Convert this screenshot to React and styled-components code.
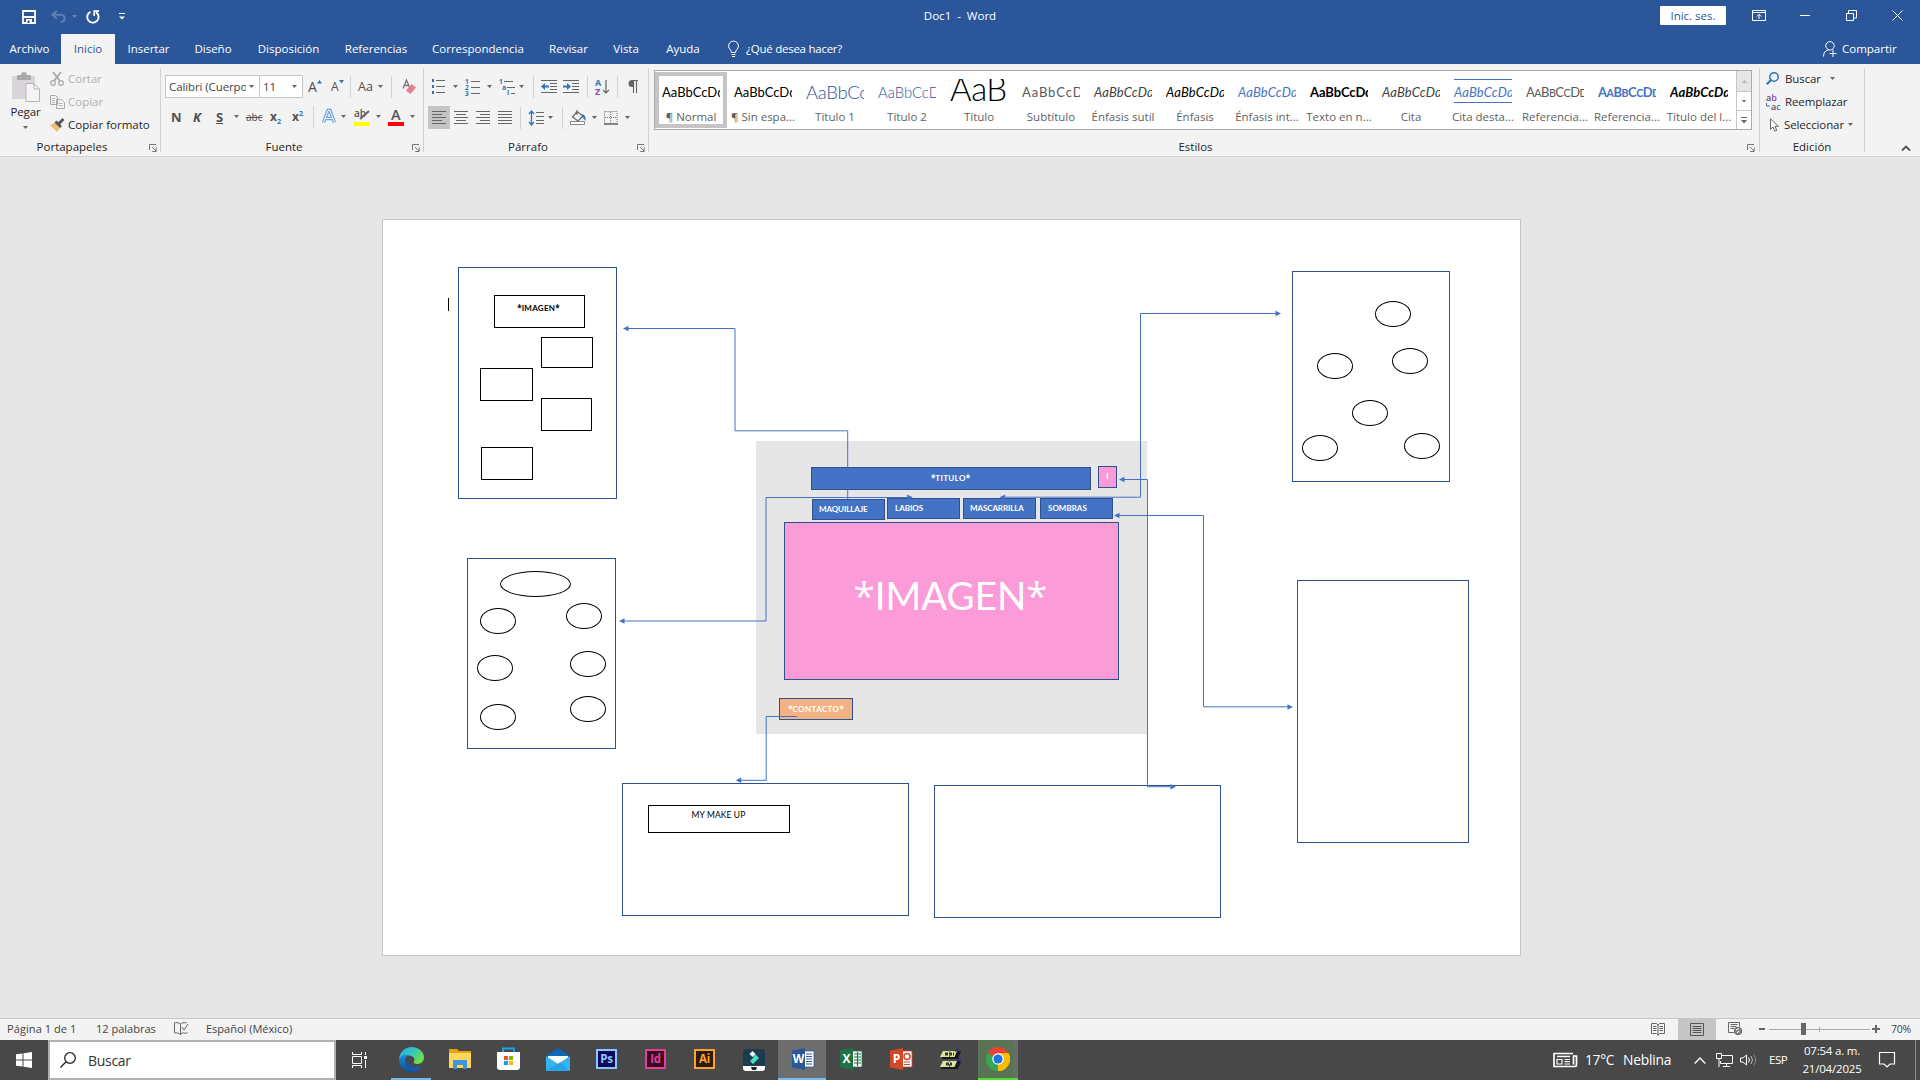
import React from "react";
import styled, { createGlobalStyle, css } from "styled-components";

const ui = `"Open Sans", "Noto Sans", sans-serif`;
const doc = `Lato, "Open Sans", sans-serif`;

const Global = createGlobalStyle`
  * { box-sizing: border-box; }
  body { margin: 0; font-family: ${ui}; font-size: 11.5px; color: #262626; overflow: hidden; }
  svg { display: block; flex: none; overflow: visible; }
`;

const Screen = styled.div`
  width: 1920px;
  height: 1080px;
  display: flex;
  flex-direction: column;
  background: #e6e6e6;
`;

/* ---------- shared pieces ---------- */
const Slot = styled.div`
  display: flex;
  flex: none;
  align-items: center;
  margin-left: ${(p) => p.$gap || 0}px;
  width: ${(p) => (p.$w ? `${p.$w}px` : "auto")};
  height: ${(p) => (p.$h ? `${p.$h}px` : "auto")};
`;
const Text = styled.div`
  flex: none;
  white-space: pre;
  line-height: 16px;
  margin-left: ${(p) => p.$gap || 0}px;
  width: ${(p) => (p.$w ? `${p.$w}px` : "auto")};
  font-size: ${(p) => p.$size || 11.5}px;
  letter-spacing: ${(p) => p.$ls || 0}px;
  color: ${(p) => p.$color || "inherit"};
`;
const CaretShape = styled.i`
  flex: none;
  width: 5px;
  height: 3px;
  margin-left: ${(p) => p.$gap || 0}px;
  background: ${(p) => p.$color || "#666"};
  clip-path: polygon(0 0, 100% 0, 50% 100%);
`;
const Sep = styled.i`
  flex: none;
  width: 1px;
  height: 22px;
  margin-left: ${(p) => p.$gap || 0}px;
  background: #d2d2d2;
`;
const Ico = ({ w, h, gap, children }) => (
  <Slot $gap={gap} $w={w}>
    <svg width={w} height={h} viewBox={`0 0 ${w} ${h}`} fill="none">{children}</svg>
  </Slot>
);

/* ---------- title bar and tabs ---------- */
const TitleBar = styled.header`
  height: 34px;
  background: #2b579a;
  color: #fff;
  display: grid;
  grid-template-columns: 660px 600px 660px;
`;
const Quick = styled.div`
  display: flex;
  align-items: center;
  padding-left: 22px;
  height: 33px;
`;
const DocTitle = styled.div`
  text-align: center;
  line-height: 32px;
  font-size: 11.5px;
  white-space: pre;
`;
const WindowButtons = styled.div`
  display: flex;
  align-items: center;
  height: 31px;
  padding-left: 400px;
`;
const SignIn = styled.div`
  width: 66px;
  height: 19px;
  border-radius: 1px;
  background: #fff;
  color: #2b579a;
  text-align: center;
  line-height: 19px;
  font-size: 11.5px;
`;
const TabBar = styled.nav`
  height: 30px;
  background: #2b579a;
  color: #fff;
  display: flex;
  align-items: center;
`;
const Tab = styled.div`
  width: ${(p) => p.$w}px;
  height: 30px;
  line-height: 30px;
  text-align: center;
  white-space: nowrap;
  ${(p) => p.$active && css`background: #f3f3f3; color: #2b579a;`}
`;
const FirstTab = styled(Tab)`
  padding-right: 2px;
`;

/* ---------- ribbon ---------- */
const Ribbon = styled.section`
  height: 93px;
  display: flex;
  background: #f3f3f3;
  border-bottom: 1px solid #d2d2d2;
`;
const Group = styled.div`
  flex: none;
  width: ${(p) => p.$w}px;
  height: 84px;
  margin-top: 4px;
  border-right: 1px solid #d2d2d2;
  display: flex;
  flex-direction: column;
`;
const GroupBody = styled.div`
  flex: none;
  height: 71px;
  display: flex;
  flex-direction: ${(p) => (p.$row ? "row" : "column")};
`;
const GroupFooter = styled.div`
  flex: none;
  display: flex;
  align-items: center;
  height: 18px;
`;
const GroupName = styled.div`
  flex: 1;
  text-align: center;
  line-height: 16px;
  padding-bottom: 2px;
`;
const ToolRow = styled.div`
  flex: none;
  display: flex;
  align-items: center;
  height: 23px;
  margin-top: ${(p) => p.$top || 0}px;
`;
const PasteButton = styled.div`
  width: 50px;
  display: flex;
  flex-direction: column;
  align-items: center;
  gap: 2px;
  padding: 4px 0 0 1px;
`;
const PasteCaret = styled(CaretShape)`
  margin-top: 4px;
`;
const ClipList = styled.div`
  display: flex;
  flex-direction: column;
  margin-top: -1px;
`;
const ClipItem = styled.div`
  display: flex;
  flex: none;
  align-items: center;
  height: 23px;
  letter-spacing: -0.1px;
  color: ${(p) => (p.$off ? "#b1b1b1" : "#262626")};
`;
const Combo = styled.div`
  height: 23px;
  width: ${(p) => p.$w}px;
  margin-left: ${(p) => p.$gap || 0}px;
  border: 1px solid #c6c6c6;
  background: #fff;
  display: flex;
  align-items: center;
  padding-left: 3px;
`;
const ComboText = styled.div`
  width: ${(p) => p.$w}px;
  overflow: hidden;
  white-space: nowrap;
  letter-spacing: -0.1px;
  color: #444;
  line-height: 20px;
`;
const Glyph = styled.div`
  flex: none;
  width: ${(p) => p.$w}px;
  margin-left: ${(p) => p.$gap || 0}px;
  font-size: ${(p) => p.$size || 13}px;
  line-height: 18px;
  color: #505050;
  font-weight: ${(p) => (p.$bold ? 700 : 400)};
  font-style: ${(p) => (p.$italic ? "italic" : "normal")};
  text-decoration: ${(p) => p.$deco || "none"};
  white-space: nowrap;
  sup, sub { font-size: 7px; color: #2e75b5; line-height: 0; }
`;
const Pressed = styled.div`
  width: 22px;
  height: 23px;
  margin-left: 4px;
  background: #c5c5c5;
  display: flex;
  align-items: center;
  padding-left: 4px;
`;

const Gallery = styled.div`
  display: flex;
  flex: none;
  width: 1098px;
  height: 60px;
  margin: 2px 0 0 5px;
  border: 1px solid #ababab;
  background: #fff;
`;
const StyleCell = styled.div`
  flex: none;
  width: 72px;
  height: 56px;
  margin-top: 1px;
  border: 4px solid ${(p) => (p.$selected ? "#c5c5c5" : "transparent")};
  display: flex;
  flex-direction: column;
  align-items: center;
`;
const Sample = styled.div`
  flex: none;
  width: 58px;
  height: 22px;
  margin-top: 5px;
  overflow: hidden;
  white-space: nowrap;
  display: flex;
  align-items: center;
  font-family: ${doc};
  line-height: 20px;
  color: ${(p) => p.$c || "#000"};
  font-size: ${(p) => p.$size || 13}px;
  font-weight: ${(p) => p.$weight || 400};
  font-style: ${(p) => (p.$i ? "italic" : "normal")};
  letter-spacing: ${(p) => (p.$ls === undefined ? 0 : p.$ls)}px;
  small { font-size: 0.82em; padding-top: 1.5px; }
`;
const TallSample = styled(Sample)`
  margin-top: 3px;
  height: 24px;
  padding-bottom: 7px;
`;
const LinedSample = styled(Sample)`
  margin-top: 3px;
  height: 24px;
  padding-top: 2px;
  border-top: 1px solid #4472c4;
  border-bottom: 1px solid #4472c4;
`;
const StyleName = styled.div`
  margin-top: 5.5px;
  color: #5f5f5f;
  white-space: nowrap;
  line-height: 16px;
`;
const Scroller = styled.div`
  width: 15px;
  margin-left: auto;
  display: grid;
  grid-template-rows: 20px 19px 19px;
  border-left: 1px solid #c6c6c6;
`;
const ScrollCell = styled.div`
  display: grid;
  place-items: center;
  background: ${(p) => (p.$off ? "#e6e6e6" : "#fff")};
  & + & { border-top: 1px solid #c6c6c6; }
`;

/* ---------- document ---------- */
const Workspace = styled.main`
  height: 861px;
  padding: 62px 0 0 382px;
`;
const Page = styled.div`
  position: relative;
  width: 1139px;
  height: 737px;
  border: 1px solid #c6c6c6;
  background: #fff;
  font-family: ${doc};
`;
const Shape = styled.div`
  position: absolute;
  left: ${(p) => p.$x - 383}px;
  top: ${(p) => p.$y - 220}px;
  width: ${(p) => p.$w}px;
  height: ${(p) => p.$h}px;
  border: ${(p) => (p.$line === "none" ? "0" : `1px solid ${p.$line || "#2f528f"}`)};
  border-radius: ${(p) => (p.$round ? "50%" : "0")};
  background: ${(p) => p.$fill || "#fff"};
  color: ${(p) => p.$color || "#fff"};
  font-size: ${(p) => p.$size || 8}px;
  font-weight: ${(p) => p.$weight || 700};
  letter-spacing: ${(p) => p.$ls || 0}px;
  line-height: 10px;
  padding: ${(p) => p.$pad || "0"};
  text-align: ${(p) => (p.$left ? "left" : "center")};
  white-space: nowrap;
`;
const Star = styled.span`
  font-family: ${ui};
  letter-spacing: 0;
`;
const Connectors = styled.svg`
  position: absolute;
  left: -1px;
  top: -1px;
`;

const ovals = [
  [1393, 314], [1335, 366], [1410, 361], [1370, 413], [1320, 448], [1422, 446],
  [498, 621], [584, 616], [495, 668], [588, 664], [498, 717], [588, 709],
];
const frames = [
  [458, 267, 159, 232], [1292, 271, 158, 211], [467, 558, 149, 191],
  [622, 783, 287, 133], [934, 785, 287, 133], [1297, 580, 172, 263],
];
const smallBoxes = [[541, 337, 52, 31], [480, 368, 53, 33], [541, 398, 51, 33], [481, 447, 52, 33]];
const menu = [["MAQUILLAJE", 812, 499, 6, -0.1], ["LABIOS", 887, 498, 7, 0], ["MASCARRILLA", 963, 498, 6, -0.1], ["SOMBRAS", 1040, 498, 7, 0]];
const wires = [
  "M626 328.5H735V430.8H847.7V499",
  "M910 497.5H766V621H622",
  "M1002 497.2H1140.5V313.5H1279",
  "M1122 479.5H1147.5V786.7H1173",
  "M1117 515.5H1203.5V706.8H1290",
  "M797 716.5H766.2V780.3H739",
];
const heads = [
  [623, 328.5, 1], [619, 621, 1], [912.7, 497.3, -1], [999.7, 497.2, 1], [1281, 313.5, -1],
  [1119, 479.5, 1], [1176, 786.7, -1], [1114, 515.5, 1], [1293, 707, -1], [735.7, 780.3, 1],
];

const Starred = ({ children }) => <><Star>*</Star>{children}<Star>*</Star></>;

const DocumentPage = () => (
  <Page>
    <Shape $x={756} $y={441} $w={391} $h={293} $fill="#e6e6e6" $line="none" />
    {frames.map(([x, y, w, h]) => <Shape key={`${x}${y}`} $x={x} $y={y} $w={w} $h={h} />)}
    <Shape $x={494} $y={295} $w={91} $h={33} $line="#000" $color="#000" $pad="7px 2px 0 0" $ls={0.3}><Starred>IMAGEN</Starred></Shape>
    {smallBoxes.map(([x, y, w, h]) => <Shape key={`${x}${y}`} $x={x} $y={y} $w={w} $h={h} $line="#000" />)}
    <Shape $x={500} $y={571} $w={71} $h={26} $line="#000" $round />
    {ovals.map(([x, y]) => <Shape key={`${x}${y}`} $x={x - 18} $y={y - 13} $w={36} $h={26} $line="#000" $round />)}
    <Shape $x={648} $y={805} $w={142} $h={28} $line="#000" $color="#000" $weight={400} $size={8.5} $ls={0.1} $pad="4px 1px 0 0">MY MAKE UP</Shape>
    <Shape $x={811} $y={467} $w={280} $h={23} $fill="#4472c4" $ls={0.35} $pad="5px 1px 0 0"><Starred>TITULO</Starred></Shape>
    <Shape $x={1098} $y={466} $w={19} $h={22} $fill="#fb9cd8" $pad="4px 0 0">I</Shape>
    {menu.map(([t, x, y, left, ls]) => (
      <Shape key={t} $x={x} $y={y} $w={73} $h={21} $fill="#4472c4" $left $ls={ls} $pad={`4px 0 0 ${left}px`}>{t}</Shape>
    ))}
    <Shape $x={784} $y={522} $w={335} $h={158} $fill="#fb9cd8" $size={38.5} $weight={400} $pad="67px 2px 0 0"><Starred>IMAGEN</Starred></Shape>
    <Shape $x={779} $y={698} $w={74} $h={22} $fill="#f4b183" $ls={0.4} $pad="5px 0 0"><Starred>CONTACTO</Starred></Shape>
    <Connectors width="1139" height="737" viewBox="382 219 1139 737" fill="none">
      {wires.map((d) => <path key={d} d={d} stroke="#4472c4" strokeWidth="1" />)}
      {heads.map(([x, y, s]) => (
        <path key={`${x}${y}`} d={`M${x} ${y}l${5.5 * s} -2.8v5.6z`} fill="#4472c4" />
      ))}
      <path d="M448.5 298V311" stroke="#000" />
    </Connectors>
  </Page>
);

/* ---------- status bar ---------- */
const StatusBar = styled.footer`
  height: 22px;
  border-top: 1px solid #c6c6c6;
  background: #f3f3f3;
  display: flex;
  align-items: center;
  padding: 0 0 2px 7px;
  font-size: 11px;
  color: #444;
`;
const StatusRight = styled.div`
  display: flex;
  align-items: center;
  margin-left: auto;
`;
const ViewActive = styled.div`
  width: 38px;
  height: 21px;
  margin: 2px 0 0 13px;
  padding-bottom: 1px;
  background: #c5c5c5;
  display: grid;
  place-items: center;
`;

/* ---------- taskbar ---------- */
const Taskbar = styled.footer`
  height: 40px;
  background: #484848;
  color: #fff;
  display: flex;
  align-items: center;
`;
const SearchBox = styled.div`
  width: 288px;
  height: 40px;
  margin-left: 16px;
  border: 2px solid #b1b1b1;
  background: #fff;
  display: flex;
  align-items: center;
  padding-left: 10px;
  color: #333;
`;
const SearchHint = styled(Text)`
  padding-top: 1px;
  line-height: 18px;
`;
const AppButton = styled.div`
  flex: none;
  width: ${(p) => p.$w || 49}px;
  height: 40px;
  margin-left: ${(p) => p.$gap || 0}px;
  padding-left: ${(p) => p.$shift || 0}px;
  display: grid;
  place-items: center;
  background: ${(p) => p.$bg || "transparent"};
  border-bottom: 2px solid ${(p) => p.$bar || "transparent"};
`;
const AdobeTile = styled.div`
  width: 21px;
  height: 20px;
  border: 2px solid ${(p) => p.$c};
  background: ${(p) => p.$bg};
  color: ${(p) => p.$c};
  font-size: 11.5px;
  line-height: 15px;
  font-weight: 700;
  letter-spacing: -0.3px;
  text-align: center;
`;
const Clock = styled.div`
  width: 60px;
  margin: 0 2px 0 13px;
  text-align: center;
  font-size: 11.5px;
  line-height: 18px;
  white-space: nowrap;
  letter-spacing: -0.2px;
`;

const Lines = ({ rows, color = "#666" }) => (
  <path d={rows.map(([x, y, w]) => `M${x} ${y + 0.5}h${w}`).join("")} stroke={color} />
);
const Launcher = () => (
  <Ico w={8} h={8} gap={5}>
    <path d="M.5 6V.5H7M3 3l4 4M7.2 3.5v4h-4" stroke="#777" />
  </Ico>
);
const Caret = ({ gap, color }) => <CaretShape $gap={gap} $color={color} />;

const styleSet = [
  { n: "¶ Normal", sel: true },
  { n: "¶ Sin espa..." },
  { n: "Título 1", c: "#2f5496", size: 18.5, weight: 300, ls: -0.3 },
  { n: "Título 2", c: "#2f5496", size: 14.8, weight: 300, ls: 0 },
  { n: "Título", size: 33, weight: 300, ls: -0.5, tall: true },
  { n: "Subtítulo", c: "#5a5a5a", ls: 0.9 },
  { n: "Énfasis sutil", c: "#404040", i: true, ls: 0.15 },
  { n: "Énfasis", i: true, ls: 0.15 },
  { n: "Énfasis int...", c: "#4472c4", i: true, ls: 0.15 },
  { n: "Texto en n...", weight: 700, ls: -0.1 },
  { n: "Cita", c: "#404040", i: true, ls: 0.15 },
  { n: "Cita desta...", c: "#4472c4", i: true, ls: 0.15, lined: true },
  { n: "Referencia...", c: "#5a5a5a", caps: true, ls: -0.5 },
  { n: "Referencia...", c: "#4472c4", caps: true, weight: 700, ls: -0.5 },
  { n: "Título del l...", i: true, weight: 700, ls: 0.1 },
];

const SmallCaps = () => (
  <>A<small>A</small>B<small>B</small>C<small>C</small>D<small>D</small></>
);

const OfficeIcon = ({ color, dark, letter, children }) => (
  <svg width="23" height="22" viewBox="0 0 23 22" fill="none">
    <path d="M12 3h10v16H12z" fill="#fff" stroke={color} strokeWidth=".8" />
    {children}
    <path d="M0 2.5L13 0v22L0 19.5z" fill={dark} />
    <text x="6.6" y="15.2" textAnchor="middle" fontSize="12" fontWeight="700" fill="#fff" fontFamily="Open Sans">{letter}</text>
  </svg>
);

export default function App() {
  return (
    <Screen>
      <Global />
      <TitleBar>
        <Quick>
          <Ico w={14} h={14}>
            <path d="M1 1h12v12H1zM1 7h12" stroke="#fff" strokeWidth="1.8" />
            <path d="M4 9h6v4H4z" fill="#fff" /><path d="M5.5 10.5h2V13h-2z" fill="#2b579a" />
          </Ico>
          <Ico w={15} h={13} gap={15}>
            <path d="M6 .8L1.5 4.8 6 8.8M2 4.8h7.5c5.5 0 5.5 7.2.3 7.2" stroke="#5f80b4" strokeWidth="2" />
          </Ico>
          <Caret gap={6} color="#6787b8" />
          <Ico w={14} h={14} gap={9}>
            <path d="M4.5 1.8A5.7 5.7 0 1 0 10 2.2" stroke="#fff" strokeWidth="1.9" />
            <path d="M8.2 6V1.2H13" stroke="#fff" strokeWidth="1.7" />
          </Ico>
          <Ico w={6} h={7} gap={19}>
            <path d="M0 .5h6" stroke="#fff" /><path d="M0 3.5h6L3 6.5z" fill="#fff" />
          </Ico>
        </Quick>
        <DocTitle>{"Doc1  -  Word"}</DocTitle>
        <WindowButtons>
          <SignIn>Inic. ses.</SignIn>
          <Ico w={14} h={11} gap={26}>
            <path d="M.5 .5h13v10H.5zM.5 2.5h13M7 9V4.5M4.8 6.5L7 4.3l2.2 2.2" stroke="#fff" />
          </Ico>
          <Ico w={10} h={11} gap={34}><path d="M0 5.5h10" stroke="#fff" /></Ico>
          <Ico w={11} h={11} gap={36}><path d="M.5 3.5h7v7h-7zM2.5 3.5v-3h8v7.5h-3" stroke="#fff" /></Ico>
          <Ico w={11} h={11} gap={35}><path d="M.5 .5l10 10M10.5 .5l-10 10" stroke="#fff" /></Ico>
        </WindowButtons>
      </TitleBar>

      <TabBar>
        <FirstTab $w={61}>Archivo</FirstTab>
        <Tab $w={54} $active>Inicio</Tab>
        <Tab $w={67}>Insertar</Tab>
        <Tab $w={62}>Diseño</Tab>
        <Tab $w={89}>Disposición</Tab>
        <Tab $w={86}>Referencias</Tab>
        <Tab $w={118}>Correspondencia</Tab>
        <Tab $w={63}>Revisar</Tab>
        <Tab $w={52}>Vista</Tab>
        <Tab $w={62}>Ayuda</Tab>
        <Ico w={11} h={16} gap={14}>
          <path d="M3.5 11.5C3.5 9 .6 8 .6 5a4.9 4.9 0 0 1 9.8 0c0 3-2.9 4-2.9 6.5zM3.5 13.5h4M4 15.5h3" stroke="#fff" />
        </Ico>
        <Text $gap={7} $w={97} $ls={-0.25}>¿Qué desea hacer?</Text>
        <Ico w={14} h={16} gap={980}>
          <circle cx="7" cy="4.8" r="4.2" stroke="#fff" />
          <path d="M.5 15.5c0-4 2-6 5-6.5M10 9v7M6.5 12.5h7" stroke="#fff" />
        </Ico>
        <Text $gap={5}>Compartir</Text>
      </TabBar>

      <Ribbon>
        <Group $w={161}>
          <GroupBody $row>
            <PasteButton>
              <svg width="28" height="30" viewBox="0 0 28 30" fill="none">
                <path d="M0 4h23v23H0z" fill="#d8d4d8" />
                <path d="M5 3h4c0-4 6-4 6 0h4v5H5z" fill="#a9a9a9" />
                <path d="M14 11.5h8l5.5 5.5v12.5H14z" fill="#f6f2f8" stroke="#b5b5b5" />
                <path d="M22 11.5V17h5.5" stroke="#b5b5b5" />
              </svg>
              <Text $ls={-0.1}>Pegar</Text>
              <PasteCaret />
            </PasteButton>
            <ClipList>
              <ClipItem $off>
                <Ico w={14} h={14}>
                  <path d="M3 0l7 9M11 0L4 9" stroke="#a9a9a9" strokeWidth="1.8" />
                  <circle cx="3" cy="11" r="2.3" stroke="#a9a9a9" strokeWidth="1.2" /><circle cx="11" cy="11" r="2.3" stroke="#a9a9a9" strokeWidth="1.2" />
                </Ico>
                <Text $gap={4}>Cortar</Text>
              </ClipItem>
              <ClipItem $off>
                <Ico w={15} h={14}>
                  <path d="M.5 .5h5l2 2v7h-7zM6.5 4.5h5l3 3v6h-8z" fill="#f3f3f3" stroke="#a9a9a9" />
                  <path d="M2 3.5h3M2 5.5h3M2 7.5h3M8.5 8.5h4M8.5 10.5h4" stroke="#b5b5b5" />
                </Ico>
                <Text $gap={3}>Copiar</Text>
              </ClipItem>
              <ClipItem>
                <Ico w={15} h={14}>
                  <path d="M0 7l6-3 5 5-4 5z" fill="#eebf7b" />
                  <path d="M5.5 3.5l5.5 5.500M8.500 6l5-5" stroke="#555" strokeWidth="2.800" />
                </Ico>
                <Text $gap={3}>Copiar formato</Text>
              </ClipItem>
            </ClipList>
          </GroupBody>
          <GroupFooter><GroupName>Portapapeles</GroupName><Launcher /><Slot $w={3} /></GroupFooter>
        </Group>

        <Group $w={263}>
          <GroupBody>
            <ToolRow $top={7}>
              <Combo $w={95} $gap={4}><ComboText $w={77}>Calibri (Cuerpo)</ComboText><Caret gap={3} /></Combo>
              <Combo $w={44} $gap={-1}><ComboText $w={28}>11</ComboText><Caret gap={1} /></Combo>
              <Glyph $w={9} $gap={5} $size={14}>A</Glyph>
              <Ico w={5} h={14}><path d="M0 3.5L2.5 0 5 3.5z" fill="#2e75b5" /></Ico>
              <Glyph $w={8} $gap={9} $size={12}>A</Glyph>
              <Ico w={5} h={14}><path d="M0 0h5L2.5 3.5z" fill="#2e75b5" /></Ico>
              <Sep $gap={6} />
              <Glyph $w={17} $gap={7} $size={12.5}>Aa</Glyph>
              <Caret gap={3} />
              <Sep $gap={8} />
              <Ico w={14} h={16} gap={10}>
                <path d="M1 9.5L4.5 1 8 9.5M2.2 6.5h4.5" stroke="#777" strokeWidth="1.3" />
                <path d="M9.5 5L14 8.5 8.5 15 4 11.5z" fill="#e8808f" />
              </Ico>
            </ToolRow>
            <ToolRow $top={7}>
              <Glyph $w={14} $gap={10} $bold>N</Glyph>
              <Glyph $w={14} $gap={8} $bold $italic>K</Glyph>
              <Glyph $w={10} $gap={9} $bold $deco="underline">S</Glyph>
              <Caret gap={8} />
              <Glyph $w={17} $gap={7} $size={10} $deco="line-through">abc</Glyph>
              <Glyph $w={15} $gap={7} $size={12} $bold>x<sub>2</sub></Glyph>
              <Glyph $w={15} $gap={7} $size={12} $bold>x<sup>2</sup></Glyph>
              <Sep $gap={6} />
              <Ico w={14} h={15} gap={8}>
                <path d="M1.5 13.5L6 1.5h2l4.5 12M3.5 9.5h7" stroke="#6fa3dc" strokeWidth="3.4" />
                <path d="M1.5 13.5L6 1.5h2l4.5 12M3.5 9.5h7" stroke="#fff" strokeWidth="1" />
              </Ico>
              <Caret gap={5} />
              <Ico w={17} h={19} gap={8}>
                <text x="0" y="9.5" fontSize="10" fontWeight="600" fill="#555" fontFamily="Open Sans">ab</text>
                <path d="M6 12L15 4" stroke="#666" strokeWidth="2.2" /><path d="M0 15h16v4H0z" fill="#ff0" />
              </Ico>
              <Caret gap={5} />
              <Ico w={16} h={19} gap={7}>
                <text x="3" y="12.5" fontSize="14.5" fontWeight="600" fill="#555" fontFamily="Open Sans">A</text>
                <path d="M0 15h16v4H0z" fill="#f00" />
              </Ico>
              <Caret gap={6} />
            </ToolRow>
          </GroupBody>
          <GroupFooter><GroupName>Fuente</GroupName><Launcher /><Slot $w={3} /></GroupFooter>
        </Group>

        <Group $w={225}>
          <GroupBody>
            <ToolRow $top={7}>
              <Ico w={15} h={15} gap={7}>
                <path d="M1 0h2v3H1zM1 6h2v3H1zM1 12h2v3H1z" fill="#2e75b5" />
                <Lines rows={[[5, 1, 9], [5, 7, 9], [5, 13, 9]]} />
              </Ico>
              <Caret gap={7} />
              <Ico w={15} h={16} gap={7}>
                {[1, 2, 3].map((n) => <text key={n} x="0" y={n * 6 - 1} fontSize="6.5" fontWeight="700" fill="#2e75b5" fontFamily="Open Sans">{n}</text>)}
                <Lines rows={[[6, 2, 9], [6, 8, 9], [6, 14, 9]]} />
              </Ico>
              <Caret gap={7} />
              <Ico w={17} h={16} gap={7}>
                <text x="0" y="5" fontSize="6.5" fontWeight="700" fill="#2e75b5" fontFamily="Open Sans">1</text>
                <text x="3" y="11" fontSize="7" fontWeight="700" fill="#2e75b5" fontFamily="Open Sans">a</text>
                <text x="8" y="16" fontSize="7" fontWeight="700" fill="#2e75b5" fontFamily="Open Sans">i</text>
                <Lines rows={[[5, 2, 9], [8, 8, 8], [12, 14, 4]]} />
              </Ico>
              <Caret gap={3} />
              <Sep $gap={9} />
              <Ico w={16} h={14} gap={7}>
                <Lines rows={[[0, 0, 16], [9, 3, 7], [9, 6, 7], [9, 9, 7], [0, 12, 16]]} />
                <path d="M0 6.5L4 3v2.5h4v2H4V10z" fill="#2e75b5" />
              </Ico>
              <Ico w={16} h={14} gap={6}>
                <Lines rows={[[0, 0, 16], [9, 3, 7], [9, 6, 7], [9, 9, 7], [0, 12, 16]]} />
                <path d="M8 6.5L4 3v2.5H0v2h4V10z" fill="#2e75b5" />
              </Ico>
              <Sep $gap={8} />
              <Ico w={14} h={16} gap={7}>
                <text x="0" y="7" fontSize="9" fontWeight="700" fill="#2e75b5" fontFamily="Open Sans">A</text>
                <text x="0" y="16" fontSize="9" fontWeight="700" fill="#8e4cb0" fontFamily="Open Sans">Z</text>
                <path d="M11 1v13M8 11l3 3 3-3" stroke="#666" strokeWidth="1.2" />
              </Ico>
              <Sep $gap={8} />
              <Ico w={10} h={14} gap={10}>
                <path d="M5.5 0v13M8.5 0v13M4 .5h6" stroke="#666" strokeWidth="1.1" />
                <path d="M5.5 0H4a3.5 3.5 0 0 0 0 7h1.5z" fill="#666" />
              </Ico>
            </ToolRow>
            <ToolRow $top={8}>
              <Pressed><Ico w={14} h={13}><Lines rows={[[0, 0, 14], [0, 3, 10], [0, 6, 14], [0, 9, 10], [0, 12, 14]]} /></Ico></Pressed>
              <Ico w={14} h={13} gap={4}><Lines rows={[[0, 0, 14], [2, 3, 10], [0, 6, 14], [2, 9, 10], [0, 12, 14]]} /></Ico>
              <Ico w={14} h={13} gap={8}><Lines rows={[[0, 0, 14], [4, 3, 10], [0, 6, 14], [4, 9, 10], [0, 12, 14]]} /></Ico>
              <Ico w={14} h={13} gap={8}><Lines rows={[[0, 0, 14], [0, 3, 14], [0, 6, 14], [0, 9, 14], [0, 12, 14]]} /></Ico>
              <Sep $gap={8} />
              <Ico w={15} h={16} gap={8}>
                <path d="M2.5 1v14M0 4l2.500-3L5 4M0 12l2.500 3L5 12" stroke="#2e75b5" strokeWidth="1.3" />
                <Lines rows={[[7, 2, 8], [7, 6, 8], [7, 10, 8], [7, 13, 8]]} />
              </Ico>
              <Caret gap={4} />
              <Sep $gap={9} />
              <Ico w={16} h={15} gap={7}>
                <path d="M7 1.5L13 6l-5 5-5.5-4zM7 0v5" stroke="#666" strokeWidth="1.2" fill="#f3f3f3" />
                <path d="M12 4c3 1 4 3 3.5 7l-3-4z" fill="#2e75b5" />
                <path d="M.5 11.5h14v3H.5z" fill="#fff" stroke="#888" />
              </Ico>
              <Caret gap={6} />
              <Ico w={14} h={14} gap={7}>
                <path d="M.5 .5h12.5v12M.5 .5V13M6.7 1v12M1 6.5h12" stroke="#777" strokeDasharray="1 1" />
                <path d="M0 13h14" stroke="#555" strokeWidth="1.4" />
              </Ico>
              <Caret gap={7} />
            </ToolRow>
          </GroupBody>
          <GroupFooter><GroupName>Párrafo</GroupName><Launcher /><Slot $w={3} /></GroupFooter>
        </Group>

        <Group $w={1111}>
          <GroupBody>
            <Gallery>
              {styleSet.map((s, k) => {
                const Box = s.lined ? LinedSample : s.tall ? TallSample : Sample;
                return (
                  <StyleCell key={k} $selected={s.sel}>
                    <Box $c={s.c} $size={s.size} $weight={s.weight} $i={s.i} $ls={s.ls}>
                      {s.caps ? <SmallCaps /> : s.tall ? "AaB" : "AaBbCcDd"}
                    </Box>
                    <StyleName>{s.n}</StyleName>
                  </StyleCell>
                );
              })}
              <Scroller>
                <ScrollCell $off><svg width="5" height="3" viewBox="0 0 5 3"><path d="M0 3h5L2.5 0z" fill="#b5b5b5" /></svg></ScrollCell>
                <ScrollCell><Caret /></ScrollCell>
                <ScrollCell><svg width="6" height="7" viewBox="0 0 6 7"><path d="M0 0h6v1H0zM0 3h6L3 6.5z" fill="#666" /></svg></ScrollCell>
              </Scroller>
            </Gallery>
          </GroupBody>
          <GroupFooter><GroupName>Estilos</GroupName><Launcher /><Slot $w={4} /></GroupFooter>
        </Group>

        <Group $w={105}>
          <GroupBody>
            <ClipList>
              <ClipItem>
                <Ico w={13} h={13} gap={6}>
                  <circle cx="8" cy="5" r="4.2" stroke="#2e75b5" strokeWidth="1.5" /><path d="M5 8L.8 12.2" stroke="#2e75b5" strokeWidth="2.2" />
                </Ico>
                <Text $gap={6} $w={40} $ls={-0.1}>Buscar</Text><Caret gap={5} />
              </ClipItem>
              <ClipItem>
                <Ico w={15} h={16} gap={6}>
                  <text x="0" y="7" fontSize="9" fontWeight="600" fill="#555" fontFamily="Open Sans">a<tspan fill="#8e4cb0">b</tspan></text>
                  <text x="5" y="16" fontSize="9" fontWeight="600" fill="#555" fontFamily="Open Sans">a<tspan fill="#2e75b5">c</tspan></text>
                  <path d="M.5 9v3H4" stroke="#2e75b5" />
                </Ico>
                <Text $gap={4} $ls={-0.1}>Reemplazar</Text>
              </ClipItem>
              <ClipItem>
                <Ico w={9} h={14} gap={10}>
                  <path d="M.5 .8v10.5l2.5-2.3 1.8 4.2 2-.8L5 8.4h3.3z" fill="#fff" stroke="#666" />
                </Ico>
                <Text $gap={5} $w={62} $ls={-0.1}>Seleccionar</Text><Caret gap={2} />
              </ClipItem>
            </ClipList>
          </GroupBody>
          <GroupFooter><GroupName>Edición</GroupName></GroupFooter>
        </Group>
        <Slot $gap={36} $h={84}>
          <svg width="10" height="84" viewBox="0 0 10 84" fill="none"><path d="M1 86.5l4-4 4 4" stroke="#555" strokeWidth="1.8" /></svg>
        </Slot>
      </Ribbon>

      <Workspace><DocumentPage /></Workspace>

      <StatusBar>
        <Text $w={89} $size={11} $ls={0.08}>Página 1 de 1</Text>
        <Text $w={78} $size={11}>12 palabras</Text>
        <Ico w={14} h={13}>
          <path d="M6.5 12.5V2C5 .5 2 .5 .5 .8v10c2 0 4 0 6 1.7 1-1 2-1.5 3-1.7M6.5 2C7.5 1 9 .6 12.5 .8M8 5l2 3 4-6M9.5 10l2 2 2-2" stroke="#666" />
        </Ico>
        <Text $gap={18} $size={11}>Español (México)</Text>
        <StatusRight>
          <Ico w={14} h={12}>
            <path d="M7 1.5v11M.5 .5h5L7 2 8.5 .5h5v10h-5L7 12l-1.5-1.5h-5zM2 3.5h3.5M2 5.5h3.5M2 7.5h3.5M8.5 3.5H12M8.5 5.5H12M8.5 7.5H12" stroke="#666" />
          </Ico>
          <ViewActive>
            <svg width="14" height="13" viewBox="0 0 14 13" fill="none"><path d="M.5 .5h13v12H.5zM2.5 3.5h9M2.5 5.5h9M2.5 7.5h9M2.5 9.5h9" stroke="#555" /></svg>
          </ViewActive>
          <Ico w={14} h={13} gap={12}>
            <path d="M6 10.5H.5V.5h11v4M2.5 2.5h7M2.5 4.5h6M2.5 6.5h4" stroke="#666" />
            <circle cx="10" cy="9" r="3.7" fill="#888" stroke="#666" /><path d="M8 8l3-1.5M9 11l2-2" stroke="#fff" />
          </Ico>
          <Ico w={6} h={2} gap={17}><path d="M0 1h6" stroke="#666" strokeWidth="2" /></Ico>
          <Ico w={101} h={12} gap={4}>
            <path d="M0 6.5h101M50.5 4v5" stroke="#ababab" /><path d="M32 0h5v12h-5z" fill="#666" />
          </Ico>
          <Ico w={8} h={8} gap={2}><path d="M0 4h8M4 0v8" stroke="#666" strokeWidth="2" /></Ico>
          <Text $gap={11} $w={29} $size={10.5} $ls={-0.3}>70%</Text>
        </StatusRight>
      </StatusBar>

      <Taskbar>
        <Ico w={16} h={16} gap={16}>
          <path d="M0 2.3l6.5-.9v6.1H0zM7.5 1.2L16 0v7.5H7.5zM0 8.5h6.5v6.1L0 13.7zM7.5 8.5H16V16l-8.5-1.2z" fill="#fff" />
        </Ico>
        <SearchBox>
          <Ico w={16} h={16}><circle cx="10" cy="6" r="5.3" stroke="#222" strokeWidth="1.3" /><path d="M6 9.8L.5 15.5" stroke="#222" strokeWidth="1.3" /></Ico>
          <SearchHint $gap={12} $size={14} $ls={-0.3}>Buscar</SearchHint>
        </SearchBox>
        <Ico w={15} h={16} gap={16}>
          <path d="M.5 0v2.5h9V0M.5 4.5h9v7h-9zM.5 16v-2.500h9V16M13.5 0v3M13.5 8v8" stroke="#fff" /><path d="M12 4h3v3h-3z" fill="#fff" />
        </Ico>
        <AppButton $gap={24} $w={40} $bar="#76b9ed">
          <svg width="25" height="25" viewBox="0 0 25 25">
            <defs>
              <linearGradient id="edgeTop" x1="0" y1="0" x2="1" y2=".5"><stop offset="0" stopColor="#2bb3e6" /><stop offset=".55" stopColor="#36c5c0" /><stop offset="1" stopColor="#6be04d" /></linearGradient>
              <linearGradient id="edgeLow" x1="0" y1="0" x2="0" y2="1"><stop offset="0" stopColor="#1b8fd8" /><stop offset="1" stopColor="#0d4fa0" /></linearGradient>
            </defs>
            <path d="M0 12.5C.5 5 6 0 12.5 0S25 4.5 25 10.5c0 4.5-3.5 6.5-7 6.5-2.5 0-3.8-1-3.3-2.2 2-3-.5-6.3-4.700-6.3S1.5 10 0 12.5z" fill="url(#edgeTop)" />
            <path d="M0 12.5C1.5 8 6 7 9.5 8c-3 2-4.5 6-2.5 10 1.500 3.500 5 6 8.500 6.600C7 26.5 0 20 0 12.5z" fill="url(#edgeLow)" />
            <path d="M9.5 10.5c-2 6 3 10.5 8.5 9.8 2.5-.3 4.3-1.5 5.6-2-1.5 3-4.6 5.6-8.1 6.300C9 24 5 17 9.5 10.5z" fill="#1459b3" />
          </svg>
        </AppButton>
        <AppButton $gap={4}>
          <svg width="22" height="20" viewBox="0 0 22 20"><path d="M0 0h8l2 2h12v17H0z" fill="#e5a50a" /><path d="M0 4h22v15H0z" fill="#ffd75e" /><path d="M4 20v-9h14v9h-4v-4H8v4z" fill="#3e97dd" /></svg>
        </AppButton>
        <AppButton>
          <svg width="23" height="24" viewBox="0 0 23 24" fill="none"><path d="M6 7V1.5h11V7" stroke="#1ba1e8" strokeWidth="2" /><path d="M0 5h23v15a3 3 0 0 1-3 3H3a3 3 0 0 1-3-3z" fill="#fff" /><path d="M7 9h4v4H7z" fill="#f25022" /><path d="M12 9h4v4h-4z" fill="#7fba00" /><path d="M7 14h4v4H7z" fill="#00a4ef" /><path d="M12 14h4v4h-4z" fill="#ffb900" /></svg>
        </AppButton>
        <AppButton>
          <svg width="24" height="26" viewBox="0 -2 24 26"><path d="M0 8l12-8 12 8v15H0z" fill="#0f67b6" /><path d="M2 8h20v9H2z" fill="#fff" /><path d="M0 8l12 8 12-8v15H0z" fill="#35b4f2" /><path d="M0 23L14 14l10 9z" fill="#1a8fe0" opacity=".5" /></svg>
        </AppButton>
        <AppButton><AdobeTile $c="#8cc6ff" $bg="#10085a">Ps</AdobeTile></AppButton>
        <AppButton><AdobeTile $c="#e0409a" $bg="#3d0720">Id</AdobeTile></AppButton>
        <AppButton><AdobeTile $c="#f9a535" $bg="#2f1a05">Ai</AdobeTile></AppButton>
        <AppButton>
          <svg width="22" height="24" viewBox="0 -2 22 24"><path d="M3 0h16a3 3 0 0 1 3 3v15H0V3a3 3 0 0 1 3-3z" fill="#1c3a50" /><path d="M9.5 2l3 3-3 3-3-3z" fill="#fff" /><path d="M12 5l4 4-6 6-3-3 3-3z" fill="#48e0c2" /><path d="M0 17h22v2a3 3 0 0 1-3 3H3a3 3 0 0 1-3-3z" fill="#fff" /><path d="M8 18h6l-1 3H9z" fill="#222" /></svg>
        </AppButton>
        <AppButton $w={48} $shift={2} $bg="#6e6e6e" $bar="#76b9ed">
          <OfficeIcon letter="W" color="#2b579a" dark="#2b579a"><path d="M14 6h6M14 8.5h6M14 11h6M14 13.5h6M14 16h6" stroke="#2b579a" strokeWidth="1.2" /></OfficeIcon>
        </AppButton>
        <AppButton $shift={2}>
          <OfficeIcon letter="X" color="#217346" dark="#217346"><path d="M14 6h7M14 9h7M14 12h7M14 15h7M17.5 4v14" stroke="#217346" strokeWidth="1.2" /></OfficeIcon>
        </AppButton>
        <AppButton $shift={3}>
          <OfficeIcon letter="P" color="#d24726" dark="#d24726"><circle cx="17" cy="8.5" r="3" stroke="#d24726" strokeWidth="1.5" /><path d="M14 14h6M14 16.5h6" stroke="#d24726" strokeWidth="1.2" /></OfficeIcon>
        </AppButton>
        <AppButton $shift={5}>
          <svg width="22" height="22" viewBox="0 -1 22 22" fill="none"><path d="M4 2h17l-3 8H2zM4 12h17l-3 8H1z" fill="#1a1a1a" /><path d="M3 2h14l-2.5 6H0zM3 12h14l-2.500 6H0z" fill="#dfe49a" /><path d="M5 5h9M6 15h6" stroke="#334" strokeWidth="2.8" strokeDasharray="3 1" /><path d="M9.5 0v20" stroke="#a33" strokeDasharray="3 2" /><path d="M15 2.500l2.500-2.500M18 12l2.500-2.500" stroke="#22c" strokeWidth="1.5" /></svg>
        </AppButton>
        <AppButton $w={40} $gap={5} $bg="linear-gradient(90deg, #5a7354 35px, #6a6e68 35px)" $bar="#4fe02f">
          <svg width="24" height="24" viewBox="0 0 24 24">
            <path d="M12 12L1.6 6A12 12 0 0 1 22.4 6z" fill="#ea4335" />
            <path d="M12 12L22.4 6A12 12 0 0 1 12 24z" fill="#fbbc04" />
            <path d="M12 12v12A12 12 0 0 1 1.6 6z" fill="#34a853" />
            <path d="M12 6h10.4A12 12 0 0 1 12 24l5.2-9z" fill="#fbbc04" />
            <circle cx="12" cy="12" r="5.8" fill="#fff" /><circle cx="12" cy="12" r="4.6" fill="#1a73e8" />
          </svg>
        </AppButton>
        <Ico w={24} h={16} gap={535}>
          <path d="M20 1.5H1v13h20.5c2 0 2-1 2-2V4H20.5v8.5M4 4.5h13" stroke="#fff" strokeWidth="1.7" />
          <path d="M4 7.5h5v4.5H4zM11.5 7.5H17M11.5 9.7H17M11.5 12H17" stroke="#fff" strokeWidth="1.2" />
        </Ico>
        <Text $gap={8} $w={38} $size={13.8} $ls={-0.3}>17°C</Text>
        <Text $w={71} $size={13.8} $ls={-0.2}>Neblina</Text>
        <Ico w={12} h={7}><path d="M.7 6.5L6 1l5.3 5.5" stroke="#fff" strokeWidth="1.3" /></Ico>
        <Ico w={17} h={15} gap={10}><path d="M6 2.5h10.5v8H4.5V8M7 13.5h7M10.5 11v3M.5 .5h5v5h-5zM3 5.5V14" stroke="#fff" /></Ico>
        <Ico w={17} h={14} gap={7}>
          <path d="M.5 5v4h2.5l3.5 3V2L3 5z" stroke="#fff" /><path d="M8.5 4.5q2 2.5 0 5" stroke="#fff" /><path d="M11 3q3 4 0 8" stroke="#bbb" /><path d="M13.5 1.5q4.5 5.5 0 11" stroke="#888" />
        </Ico>
        <Text $gap={12} $w={20} $size={11.5} $ls={-0.5}>ESP</Text>
        <Clock>07:54 a. m.<br />21/04/2025</Clock>
        <Ico w={16} h={16} gap={15}><path d="M.5 .5h15v11.5H11L8 15l-3-3H.5z" stroke="#fff" strokeWidth="1.2" /></Ico>
        <Ico w={1} h={40} gap={20}><path d="M.5 0v40" stroke="#8a8a8a" /></Ico>
      </Taskbar>
    </Screen>
  );
}
